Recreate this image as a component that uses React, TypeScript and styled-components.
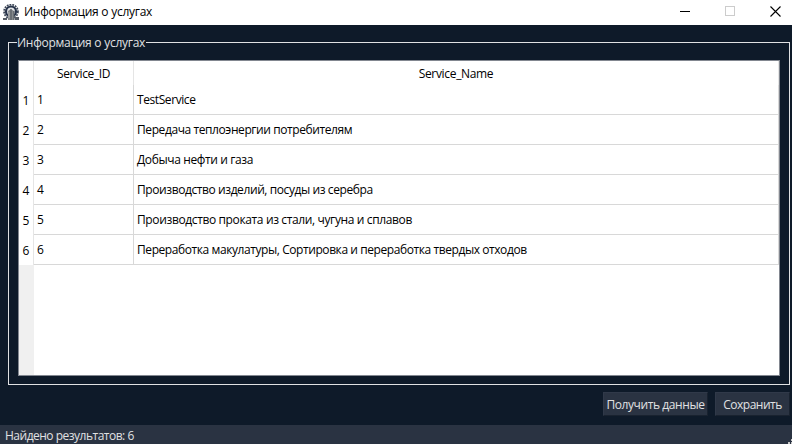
import React from "react";
import styled, { createGlobalStyle } from "styled-components";

const Global = createGlobalStyle`
  * { box-sizing: border-box; }
  html, body { margin: 0; padding: 0; }
  body { font: 12px/16px "Open Sans", "Noto Sans", sans-serif; overflow: hidden; }
`;

const Window = styled.div`
  width: 792px;
  height: 444px;
  display: flex;
  flex-direction: column;
  background: #0e1a29;
  color: #e0e1e3;
`;

const TitleBar = styled.header`
  height: 25px;
  flex: none;
  display: flex;
  align-items: center;
  background: #fff;
  color: #000;
  padding: 0 11px 2px 3px;
`;

const Text = styled.span<{ $ls?: number }>`
  white-space: pre;
  letter-spacing: ${(p) => p.$ls ?? -0.41}px;
`;

const Title = styled.div`
  flex: 1;
  padding: 1px 0 0 5px;
`;

const Controls = styled.div`
  display: flex;
  gap: 34px;
`;

const Content = styled.main`
  flex: 1;
  padding: 10px 2px 0 8px;
`;

const Group = styled.fieldset`
  margin: 0;
  min-width: 0;
  height: 350px;
  padding: 10px 9px 8px 9px;
  border: 1px solid #e0e1e3;
`;

const Legend = styled.legend`
  height: 15px;
  padding: 0 1px 0 0;
  margin-left: -1px;
`;

const Table = styled.div`
  height: 316px;
  width: 762px;
  border: 1px solid #828790;
  background: #fff;
  color: #000;
  display: grid;
  grid-template-columns: 15px 100px 1fr;
  grid-template-rows: 24px repeat(6, 30px) 1fr;
`;

const HeadCell = styled.div`
  display: flex;
  align-items: center;
  justify-content: center;
  padding-top: 2px;
  border-right: 1px solid #e5e5e5;
`;

const RowHead = styled.div`
  display: flex;
  align-items: center;
  justify-content: flex-end;
  padding: 1px 4px 0 0;
  border-right: 1px solid #e5e5e5;
`;

const Cell = styled.div`
  display: flex;
  align-items: center;
  padding-left: 3px;
  border-right: 1px solid #d8d8d8;
  border-bottom: 1px solid #d8d8d8;
`;

const Gutter = styled.div`
  background: #f0f0f0;
`;

const Actions = styled.div`
  display: flex;
  justify-content: flex-end;
  gap: 7px;
  padding-top: 7px;
`;

const Button = styled.button<{ $w: number }>`
  width: ${(p) => p.$w}px;
  height: 24px;
  padding: 2px 0 0;
  font: inherit;
  color: #e0e1e3;
  background: #2a3342;
  border: 1px solid;
  border-color: #303949 #19222f #19222f #303949;
  white-space: nowrap;
`;

const StatusBar = styled.footer`
  height: 19px;
  flex: none;
  display: flex;
  justify-content: space-between;
  align-items: flex-end;
  padding-left: 5px;
  background: #2a3342;
`;

const rows: [string, number][] = [
  ["TestService", -0.42],
  ["Передача теплоэнергии потребителям", -0.41],
  ["Добыча нефти и газа", -0.38],
  ["Производство изделий, посуды из серебра", -0.41],
  ["Производство проката из стали, чугуна и сплавов", -0.37],
  ["Переработка макулатуры, Сортировка и переработка твердых отходов", -0.42],
];

const AppIcon = () => (
  <svg width="16" height="16" viewBox="0 0 16 16">
    <circle cx="8" cy="7.5" r="6.9" fill="none" stroke="#3c4656" strokeWidth="1.8" strokeDasharray="1.8 1" />
    <circle cx="8" cy="7.5" r="5" fill="#e4e6e9" stroke="#28344a" strokeWidth="2.2" />
    <path d="M5 16V7l3-2 3 2v9z" fill="#85898c" />
    <path d="M8 5v11M11 7v9" stroke="#4c535b" />
    <path d="M0 14h4v2H0zM12 13h4v3h-4z" fill="#565c65" />
    <path d="M6 8v6" stroke="#b2b4b4" />
  </svg>
);

export default function App() {
  return (
    <>
      <Global />
      <Window>
        <TitleBar>
          <AppIcon />
          <Title><Text $ls={-0.26}>Информация о услугах</Text></Title>
          <Controls>
            <svg width="11" height="11" shapeRendering="crispEdges"><path d="M0 5.5h10" stroke="#000" /></svg>
            <svg width="11" height="11" shapeRendering="crispEdges"><path d="M.5 .5h9v9h-9z" fill="none" stroke="#ccc" /></svg>
            <svg width="11" height="11"><path d="M.5 .5l10 10M10.5 .5l-10 10" stroke="#000" strokeWidth="1.1" /></svg>
          </Controls>
        </TitleBar>
        <Content>
          <Group>
            <Legend><Text $ls={-0.26}>Информация о услугах</Text></Legend>
            <Table>
              <HeadCell />
              <HeadCell><Text>Service_ID</Text></HeadCell>
              <HeadCell><Text $ls={-0.33}>Service_Name</Text></HeadCell>
              {rows.map(([name, ls], i) => (
                <React.Fragment key={name}>
                  <RowHead><Text>{i + 1}</Text></RowHead>
                  <Cell>{i + 1}</Cell>
                  <Cell><Text $ls={ls}>{name}</Text></Cell>
                </React.Fragment>
              ))}
              <Gutter />
            </Table>
          </Group>
          <Actions>
            <Button $w={105}><Text>Получить данные</Text></Button>
            <Button $w={75}><Text $ls={-0.5}>Сохранить</Text></Button>
          </Actions>
        </Content>
        <StatusBar>
          <Text $ls={-0.5}>Найдено результатов: 6</Text>
          <svg width="4" height="5" shapeRendering="crispEdges">
            <path d="M0 3h2v2H0zM3 0h1v2H3zM3 3h1v2H3z" fill="#c8c8c8" />
          </svg>
        </StatusBar>
      </Window>
    </>
  );
}
